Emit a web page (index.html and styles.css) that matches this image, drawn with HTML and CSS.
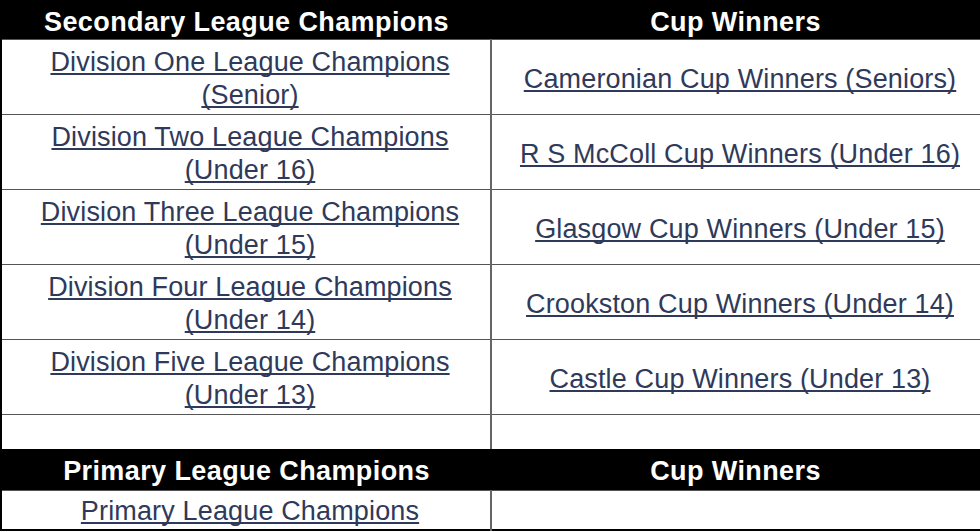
FILE: index.html
```html
<!DOCTYPE html>
<html>
<head>
<meta charset="utf-8">
<link rel="stylesheet" href="styles.css">
</head>
<body>
<table class="results">
  <colgroup><col class="c1"><col class="c2"></colgroup>
  <tr class="head head-top"><th>Secondary League Champions</th><th>Cup Winners</th></tr>
  <tr class="row"><td><a href="#">Division One League Champions (Senior)</a></td><td><a href="#">Cameronian Cup Winners (Seniors)</a></td></tr>
  <tr class="row"><td><a href="#">Division Two League Champions (Under 16)</a></td><td><a href="#">R S McColl Cup Winners (Under 16)</a></td></tr>
  <tr class="row"><td><a href="#">Division Three League Champions (Under 15)</a></td><td><a href="#">Glasgow Cup Winners (Under 15)</a></td></tr>
  <tr class="row"><td><a href="#">Division Four League Champions (Under 14)</a></td><td><a href="#">Crookston Cup Winners (Under 14)</a></td></tr>
  <tr class="row"><td><a href="#">Division Five League Champions (Under 13)</a></td><td><a href="#">Castle Cup Winners (Under 13)</a></td></tr>
  <tr class="empty"><td></td><td></td></tr>
  <tr class="head head-mid"><th>Primary League Champions</th><th>Cup Winners</th></tr>
  <tr class="last"><td><a href="#">Primary League Champions</a></td><td></td></tr>
</table>
</body>
</html>
```
FILE: styles.css
```css
html, body {
  margin: 0;
  padding: 0;
  background: #fff;
}
.results {
  width: 980px;
  border-collapse: collapse;
  table-layout: fixed;
  font-family: "Liberation Sans", Arial, sans-serif;
  font-size: 27px;
  border-left: 2px solid #000;
  border-right: 2px solid #000;
  border-bottom: 2px solid #000;
}
.c1 { width: 490px; }
.c2 { width: 490px; }
.results th {
  background: #000;
  color: #fff;
  font-weight: bold;
  padding: 0 4px;
  line-height: 33px;
  text-align: center;
  letter-spacing: 0.4px;
}
.head-top th { height: 34px; padding-top: 5px; padding-bottom: 0; }
.head-mid th { height: 38px; padding-top: 3px; padding-bottom: 0; }
.results td {
  border-top: 1px solid #555;
  border-left: 2px solid #666;
  text-align: center;
  vertical-align: middle;
  padding: 5px 16px 1px 24px;
  line-height: 33px;
}
.results tr > td:first-child { border-left: none; }
.row td { height: 68px; }
.empty td { height: 28px; }
.last td { height: 35px; padding-top: 3px; padding-bottom: 0; }
.results a {
  color: #2f3a5a;
  text-decoration: underline;
  text-decoration-skip-ink: none;
  text-underline-offset: 2px;
  letter-spacing: 0.15px;
}
```
